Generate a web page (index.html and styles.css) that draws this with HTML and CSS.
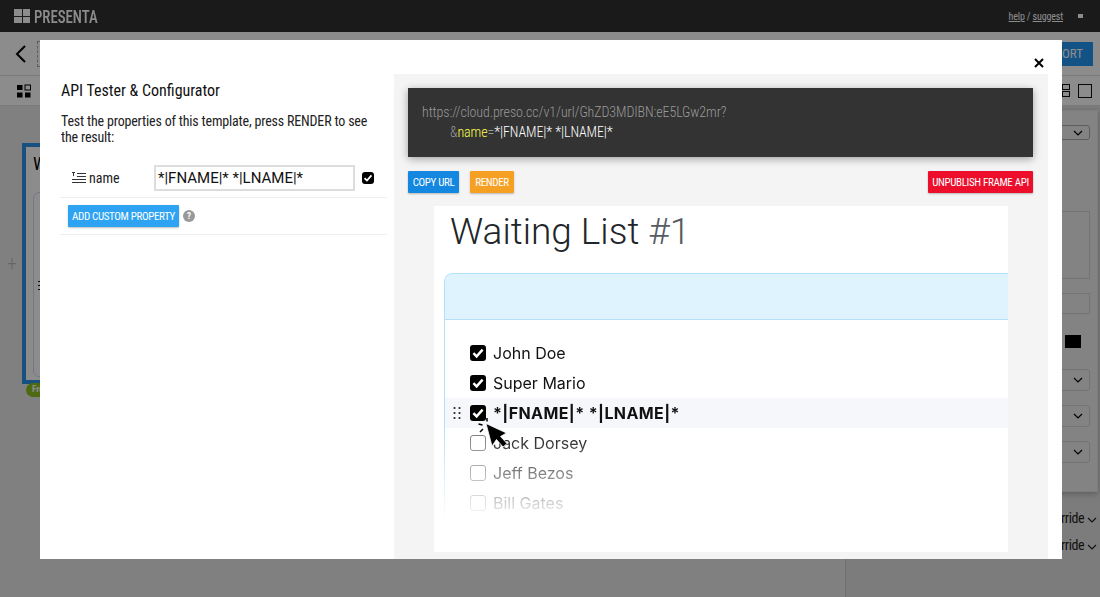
FILE: index.html
```html
<!DOCTYPE html>
<html>
<head>
    <title>Presenta - API Tester</title>
    <link rel="stylesheet" href="styles.css">
</head>
<body>
    <svg class="defs" width="0" height="0">
        <symbol id="tick" viewBox="0 0 16 16">
            <path d="M3.4 8.200l3.200 3.200 6-6.800" fill="none" stroke="#fff" stroke-width="2.4"/>
        </symbol>
        <symbol id="chev" viewBox="0 0 10 6">
            <path d="M1 1l4 4 4-4" fill="none" stroke="currentColor" stroke-width="1.2"/>
        </symbol>
    </svg>

    <div class="app">
        <div class="topbar">
            <div class="logo">
                <div class="logo-grid"><i></i><i></i><i></i><i></i></div>
                <span>PRESENTA</span>
            </div>
            <div class="top-links"><a>help</a> / <a>suggest</a></div>
            <div class="top-menu"></div>
        </div>

        <div class="toolbar">
            <svg class="back" width="12" height="20" viewBox="0 0 12 20">
                <path d="M10 2L2 10l8 8" fill="none" stroke="#000" stroke-width="2"/>
            </svg>
            <div class="title-box"></div>
            <div class="export">EXPORT</div>
        </div>

        <div class="subbar">
            <svg width="14" height="14" viewBox="0 0 14 14">
                <rect x="0" y="1" width="5.5" height="5"/>
                <rect x="8" y="1" width="5.5" height="5" fill="none" stroke="#000"/>
                <rect x="0" y="8.500" width="5.500" height="5"/>
                <rect x="8" y="8.500" width="5.500" height="5"/>
            </svg>
            <div class="view-icons">
                <div class="view-split"><i></i><i></i></div>
                <div class="view-single"></div>
            </div>
        </div>

        <div class="workspace">
            <div class="canvas">
                <div class="add-frame">+</div>
                <div class="frame-wrap">
                    <div class="frame">
                        <div class="frame-title">W</div>
                        <div class="frame-inner"><div class="frame-grip"></div></div>
                    </div>
                    <div class="frame-tag">Free</div>
                </div>
            </div>
            <div class="sidebar">
                <div class="side-panel">
                    <div class="side-select first"><svg class="chev"><use href="#chev"/></svg></div>
                    <div class="side-box"></div>
                    <div class="side-input"></div>
                    <div class="side-color"><i></i></div>
                    <div class="side-select"><svg class="chev"><use href="#chev"/></svg></div>
                    <div class="side-select"><svg class="chev"><use href="#chev"/></svg></div>
                    <div class="side-select"><svg class="chev"><use href="#chev"/></svg></div>
                </div>
                <div class="side-link">Override <svg class="chev"><use href="#chev"/></svg></div>
                <div class="side-link">Override <svg class="chev"><use href="#chev"/></svg></div>
            </div>
        </div>
    </div>

    <div class="backdrop"></div>

    <div class="modal">
        <svg class="close" width="10" height="10" viewBox="0 0 10 10">
            <path d="M1 1l8 8M9 1l-8 8" stroke="#000" stroke-width="2"/>
        </svg>

        <div class="left-pane">
            <h3>API Tester &amp; Configurator</h3>
            <p>Test the properties of this template, press RENDER to see the result:</p>
            <div class="prop-row">
                <svg class="prop-icon" width="14" height="12" viewBox="0 0 14 12">
                    <path d="M0 .5h3M1.500 .5v3.500M5 1.500h9M5 4.500h9M0 7.500h14M0 10.500h14" fill="none" stroke="#333"/>
                </svg>
                <span class="prop-name">name</span>
                <input class="prop-input" type="text" value="*|FNAME|* *|LNAME|*">
                <div class="check small"><svg><use href="#tick"/></svg></div>
            </div>
            <div class="add-row">
                <button class="btn btn-sky">ADD CUSTOM PROPERTY</button>
                <span class="help-dot">?</span>
            </div>
        </div>

        <div class="right-pane">
            <div class="url-box">
                <div>https://cloud.preso.cc/v1/url/GhZD3MDIBN:eE5LGw2mr?</div>
                <div class="url-param">&amp;<span class="param-key">name</span>=<span class="param-val">*|FNAME|* *|LNAME|*</span></div>
            </div>
            <div class="actions">
                <button class="btn btn-blue">COPY URL</button>
                <button class="btn btn-orange">RENDER</button>
                <button class="btn btn-red">UNPUBLISH FRAME API</button>
            </div>
            <div class="preview">
                <h1>Waiting List <span>#1</span></h1>
                <div class="card">
                    <div class="card-head"></div>
                    <ul class="list">
                        <li><div class="check"><svg><use href="#tick"/></svg></div>John Doe</li>
                        <li><div class="check"><svg><use href="#tick"/></svg></div>Super Mario</li>
                        <li class="active">
                            <svg class="grip" width="8" height="14" viewBox="0 0 8 14">
                                <g fill="#222">
                                    <circle cx="1.500" cy="2" r="1.100"/><circle cx="6.500" cy="2" r="1.100"/>
                                    <circle cx="1.500" cy="7" r="1.100"/><circle cx="6.500" cy="7" r="1.100"/>
                                    <circle cx="1.500" cy="12" r="1.100"/><circle cx="6.500" cy="12" r="1.100"/>
                                </g>
                            </svg>
                            <div class="check"><svg><use href="#tick"/></svg></div>*|FNAME|* *|LNAME|*
                        </li>
                        <li><div class="check off"></div>Jack Dorsey</li>
                        <li><div class="check off"></div>Jeff Bezos</li>
                        <li><div class="check off"></div>Bill Gates</li>
                    </ul>
                </div>
                <svg class="cursor" width="32" height="34" viewBox="0 0 32 34">
                    <path d="M9 5.500L15 28l4.500-6.500L26 29l4-3.500-6.500-7L29.500 15z" fill="#000" stroke="#fff" stroke-width=".8"/>
                    <path d="M10 0v3.500M1.500 6l4 1M3 14l3-3" stroke="#000" stroke-width="1.500" fill="none"/>
                </svg>
            </div>
        </div>
    </div>
</body>
</html>
```

FILE: styles.css
```css
* {
    box-sizing: border-box;
}

html, body {
    margin: 0;
    padding: 0;
    height: 597px;
    overflow: hidden;
}

body {
    font-family: Roboto, Arial, sans-serif;
    font-stretch: 85%;
    background: #fff;
    position: relative;
}

.defs {
    position: absolute;
}

/* app behind the dialog */
.app {
    height: 597px;
    display: flex;
    flex-direction: column;
}

.topbar {
    height: 32px;
    background: #303030;
    display: flex;
    align-items: center;
    padding: 0 14px;
    flex: none;
}

.logo {
    display: flex;
    align-items: center;
    gap: 4px;
    color: #fff;
    font-size: 19px;
    font-stretch: 75%;
    font-weight: 500;
    flex: 1;
}

.logo span {
    transform: scaleX(.78);
    transform-origin: left center;
}

.logo-grid {
    display: grid;
    grid-template-columns: 7.500px 7.500px;
    grid-template-rows: 6.500px 6.500px;
    gap: 1px;
}

.logo-grid i {
    background: #fff;
}

.top-links {
    color: #fff;
    font-size: 10px;
    letter-spacing: -.15px;
}

.top-links a {
    text-decoration: underline;
}

.top-menu {
    width: 5px;
    height: 4px;
    background: #fff;
    margin: 0 3px 0 15px;
}

.toolbar {
    height: 44px;
    background: #fff;
    border-bottom: 1px solid #ddd;
    display: flex;
    align-items: center;
    padding: 0 7px 0 15px;
    flex: none;
}

.back {
    margin-right: 10px;
}

.title-box {
    width: 200px;
    height: 26px;
    border: 1px dashed #aaa;
}

.export {
    margin-left: auto;
    width: 100px;
    height: 24px;
    line-height: 24px;
    background: #2196f3;
    color: #fff;
    font-size: 13px;
    text-align: right;
    padding-right: 10px;
}

.subbar {
    height: 30px;
    background: #fff;
    border-bottom: 1px solid #ddd;
    display: flex;
    align-items: center;
    padding: 0 8px 0 17px;
    flex: none;
}

.view-icons {
    margin-left: auto;
    display: flex;
    gap: 8px;
}

.view-split {
    display: flex;
    flex-direction: column;
    gap: 1px;
}

.view-split i {
    width: 8px;
    height: 6px;
    border: 1px solid #111;
}

.view-single {
    width: 14px;
    height: 14px;
    border: 1px solid #111;
}

.workspace {
    flex: 1;
    display: flex;
    min-height: 0;
}

.canvas {
    flex: 1;
    background: #eaeaea;
    display: flex;
    align-items: flex-start;
    padding: 37px 0 0 7px;
    gap: 0;
}

.add-frame {
    width: 15px;
    margin-top: 108px;
    font-size: 20px;
    color: #bbb;
    font-weight: 300;
}

.frame-wrap {
    width: 300px;
    position: relative;
}

.frame {
    height: 241px;
    background: #fff;
    border: 4px solid #2c93e8;
    padding: 6px 7px;
}

.frame-title {
    font-size: 18px;
    height: 39px;
}

.frame-inner {
    height: 185px;
    border: 1px solid #cde;
    border-radius: 6px;
    padding: 88px 0 0 4px;
}

.frame-grip {
    width: 6px;
    height: 9px;
    background: repeating-linear-gradient(#111 0 1px, transparent 1px 4px);
}

.frame-tag {
    position: absolute;
    left: 4px;
    top: 240px;
    background: #8ec21e;
    color: #fff;
    font-size: 9px;
    font-weight: 700;
    padding: 1px 6px;
    border-radius: 7px;
    height: 14px;
}

.sidebar {
    width: 255px;
    flex: none;
    background: #e2e2e2;
    border-left: 1px solid #ccc;
    padding: 4px 2px 0 0;
}

.side-panel {
    height: 382px;
    background: #eee;
    border: 1px solid #e4e4e4;
    box-shadow: 0 2px 6px rgba(0, 0, 0, .25);
    padding: 14px 7px 0 12px;
}

.side-select {
    height: 22px;
    border: 1px solid #d4d4d4;
    border-radius: 3px;
    margin-bottom: 14px;
    display: flex;
    align-items: center;
    justify-content: flex-end;
    padding-right: 6px;
    color: #000;
}

.side-select.first {
    height: 15px;
    border-color: #aaa;
    margin-bottom: 71px;
}

.chev {
    width: 10px;
    height: 6px;
}

.side-box {
    height: 68px;
    border: 1px solid #d4d4d4;
    margin-bottom: 14px;
}

.side-input {
    height: 21px;
    border: 1px solid #d4d4d4;
    margin-bottom: 21px;
}

.side-color {
    height: 34px;
    display: flex;
    justify-content: flex-end;
    padding-right: 9px;
}

.side-color i {
    width: 16px;
    height: 13px;
    background: #000;
}

.side-link {
    color: #222;
    font-size: 14px;
    letter-spacing: -.4px;
    text-align: right;
    height: 27px;
    line-height: 27px;
    padding-right: 1px;
}

.side-panel + .side-link {
    margin-top: 13px;
}

/* dialog */
.backdrop {
    position: absolute;
    inset: 0;
    background: rgba(0, 0, 0, .45);
}

.modal {
    position: absolute;
    left: 40px;
    top: 40px;
    width: 1022px;
    height: 519px;
    background: #fff;
    display: flex;
}

.close {
    position: absolute;
    right: 18px;
    top: 18px;
}

.left-pane {
    width: 354px;
    padding: 41px 7px 0 21px;
    flex: none;
}

.left-pane h3 {
    margin: 0;
    font-size: 16px;
    font-weight: 400;
    line-height: 20px;
    color: #111;
}

.left-pane p {
    margin: 12px 0 0;
    font-size: 14px;
    letter-spacing: -.18px;
    line-height: 16px;
    color: #222;
}

.prop-row {
    display: flex;
    align-items: center;
    height: 38px;
    margin: 15px 0 0 -1px;
    padding: 0 0 1px 12px;
    border-bottom: 1px solid #eee;
}

.prop-icon {
    flex: none;
}

.prop-name {
    margin-left: 3px;
    width: 65px;
    font-size: 14px;
    color: #222;
}

.prop-input {
    width: 201px;
    height: 26px;
    border: 2px solid #ddd;
    padding: 0 2px;
    font-family: inherit;
    font-stretch: 100%;
    font-size: 15px;
    color: #111;
    outline: none;
}

.add-row {
    display: flex;
    align-items: center;
    height: 37px;
    margin-left: -1px;
    padding-left: 8px;
    border-bottom: 1px solid #eee;
    gap: 4px;
}

.help-dot {
    width: 12px;
    height: 12px;
    border-radius: 50%;
    background: #999;
    color: #fff;
    font-size: 9px;
    font-weight: 700;
    text-align: center;
    line-height: 12px;
}

.btn {
    border: none;
    border-radius: 1px;
    color: #fff;
    height: 22px;
    padding: 0 4px;
    font-family: inherit;
    font-stretch: 85%;
    font-size: 11px;
    letter-spacing: -.35px;
    white-space: nowrap;
    box-shadow: 0 1px 2px rgba(0, 0, 0, .25);
}

.btn-sky {
    background: #2ea3f2;
}

.btn-blue {
    width: 51px;
    background: #1488e0;
}

.btn-orange {
    width: 44px;
    background: #f5a023;
}

.btn-red {
    width: 105px;
    background: #ec0e2b;
    margin-left: auto;
}

.right-pane {
    width: 654px;
    margin-top: 34px;
    background: #f4f4f4;
    padding: 14px 15px 0 14px;
    flex: none;
}

.url-box {
    height: 69px;
    background: #333;
    box-shadow: 0 2px 8px rgba(0, 0, 0, .35);
    padding: 14px;
    color: #999;
    font-size: 14px;
    font-weight: 300;
    letter-spacing: -.1px;
    line-height: 20px;
}

.url-param {
    padding-left: 28px;
}

.param-key {
    color: #ffff4d;
}

.param-val {
    color: #fff;
}

.actions {
    display: flex;
    gap: 11px;
    margin-top: 14px;
}

.preview {
    position: relative;
    margin: 13px 25px 0 26px;
    height: 346px;
    padding-left: 10px;
    background: #fff;
    overflow: hidden;
    font-family: Inter, Roboto, sans-serif;
    font-stretch: normal;
}

.preview h1 {
    margin: 0;
    height: 67px;
    padding: 2px 0 0 6px;
    font-family: Roboto, sans-serif;
    font-size: 37px;
    font-weight: 350;
    line-height: 48px;
    color: #212529;
}

.preview h1 span {
    color: #555c63;
}

.card {
    height: 260px;
    -webkit-mask-image: linear-gradient(#000 60%, rgba(0, 0, 0, .1) 92%, transparent);
    mask-image: linear-gradient(#000 60%, rgba(0, 0, 0, .1) 92%, transparent);
    border-left: 1px solid #b5e0fa;
    border-top-left-radius: 8px;
}

.card-head {
    height: 47px;
    background: #dff3ff;
    border: 1px solid #b5e0fa;
    border-left: none;
    border-right: none;
    border-top-left-radius: 8px;
}

.list {
    list-style: none;
    margin: 0;
    padding: 18px 0 0;
}

.list li {
    position: relative;
    height: 30px;
    display: flex;
    align-items: center;
    gap: 7px;
    padding-left: 25px;
    font-size: 16px;
    color: #111;
}

.list li.active {
    background: #f6f7fa;
    font-weight: 700;
    letter-spacing: .4px;
}

.grip {
    position: absolute;
    left: 8px;
    top: 8px;
}

.check {
    width: 16px;
    height: 16px;
    background: #000;
    border-radius: 3px;
    flex: none;
}

.check svg {
    display: block;
    width: 100%;
    height: 100%;
}

.check.small {
    width: 12px;
    height: 12px;
    margin-left: 7px;
}

.check.off {
    background: #fff;
    border: 1.5px solid #777;
}

.cursor {
    position: absolute;
    left: 43px;
    top: 212px;
}
```
